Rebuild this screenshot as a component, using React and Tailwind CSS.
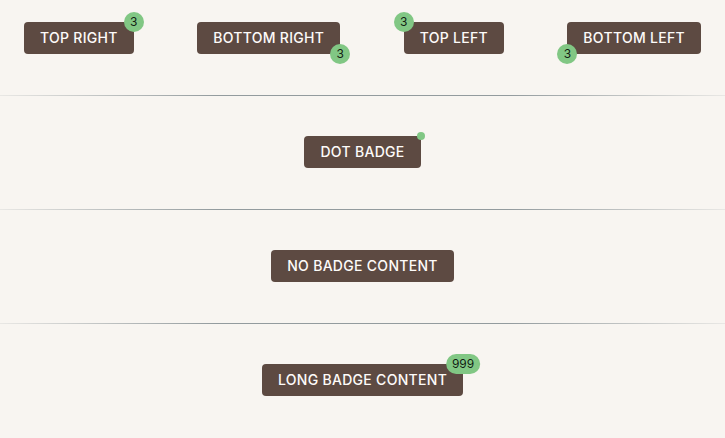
import React from "react";

function Btn({ children }) {
  return (
    <button className="h-8 px-4 rounded bg-[#5d4a42] text-[#fdfbf9] text-[14px] font-medium uppercase tracking-[0.3px] leading-none whitespace-nowrap">
      {children}
    </button>
  );
}

function Badge({ children, pos = "tr", dot = false }) {
  const posCls = {
    tr: "top-0 right-0 translate-x-1/2 -translate-y-1/2",
    br: "bottom-0 right-0 translate-x-1/2 translate-y-1/2",
    tl: "top-0 left-0 -translate-x-1/2 -translate-y-1/2",
    bl: "bottom-0 left-0 -translate-x-1/2 translate-y-1/2",
  }[pos];
  if (dot) {
    return <span className={`absolute ${posCls} w-2 h-2 rounded-full bg-[#81c784]`} />;
  }
  return (
    <span
      className={`absolute ${posCls} h-5 min-w-5 px-1.5 rounded-full bg-[#81c784] text-[rgba(0,0,0,0.87)] text-[12px] font-normal leading-none flex items-center justify-center`}
    >
      {children}
    </span>
  );
}

function Badged({ label, badge, pos, dot }) {
  return (
    <span className="relative inline-flex">
      <Btn>{label}</Btn>
      <Badge pos={pos} dot={dot}>{badge}</Badge>
    </span>
  );
}

function Divider() {
  return <div className="h-px mt-[41px] mb-10 bg-[linear-gradient(to_right,rgba(146,154,157,0.15),#939b9e_30%,#939b9e_70%,rgba(146,154,157,0.15))]" />;
}

export default function App() {
  return (
    <div className="min-h-screen w-full bg-[#f8f5f1] pt-[22px]" style={{ fontFamily: "Inter, 'Noto Sans', sans-serif" }}>
      <div className="flex justify-between px-6">
        <Badged label="Top Right" badge="3" pos="tr" />
        <Badged label="Bottom Right" badge="3" pos="br" />
        <Badged label="Top Left" badge="3" pos="tl" />
        <Badged label="Bottom Left" badge="3" pos="bl" />
      </div>
      <Divider />
      <div className="flex justify-center">
        <Badged label="Dot Badge" pos="tr" dot />
      </div>
      <Divider />
      <div className="flex justify-center">
        <Btn>No Badge Content</Btn>
      </div>
      <Divider />
      <div className="flex justify-center">
        <Badged label="Long Badge Content" badge="999" pos="tr" />
      </div>
    </div>
  );
}
